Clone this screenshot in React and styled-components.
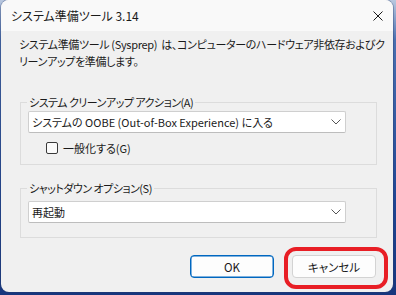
import React from "react";
import styled, { createGlobalStyle } from "styled-components";

const Global = createGlobalStyle`
  html, body { margin: 0; padding: 0; }
  body {
    width: 396px; height: 295px; overflow: hidden;
    background: linear-gradient(180deg, #b9c8df 0px, #4a6fb0 40px, #1f4593 200px, #17367d 295px);
    font-family: "Noto Sans CJK JP", "Noto Sans", sans-serif;
    font-feature-settings: "palt";
    color: #1a1a1a;
  }
`;

const Window = styled.div`
  margin-left: 1px;
  width: 392px;
  height: 292px;
  border-radius: 8px;
  overflow: hidden;
  background: #f0f0f0;
  display: flex;
  flex-direction: column;
  box-shadow: 0 0 0 1px rgba(40, 60, 110, 0.35);
`;

const TitleBar = styled.div`
  height: 31px;
  flex: none;
  background: #f9f9f9;
  display: flex;
  align-items: center;
  justify-content: space-between;
  padding-left: 10px;
  font-size: 12px;
`;

const CloseBtn = styled.div`
  width: 46px;
  height: 31px;
  display: flex;
  align-items: center;
  justify-content: center;
  margin-right: -8px;
`;

const Body = styled.div`
  flex: 1;
  display: flex;
  flex-direction: column;
  padding: 5px 16px 0 18px;
  font-size: 11px;
`;

const Desc = styled.div`
  line-height: 17px;
  font-size: 11px;
  letter-spacing: -0.34px;
  white-space: pre;
`;

const Group = styled.fieldset`
  margin: ${(p) => p.$mt}px 0 0 1px;
  border: 1px solid #dcdcdc;
  padding: ${(p) => p.$pt}px 30px ${(p) => p.$pb}px 7px;
  min-width: 0;
`;

const Legend = styled.legend`
  padding: 0 2px;
  margin-left: -1px;
  font-size: 11px;
  letter-spacing: -0.5px;
  line-height: 16px;
`;

const Combo = styled.div`
  height: 22px;
  box-sizing: border-box;
  background: #fff;
  border: 1px solid #cfcfcf;
  border-bottom-color: #bdbdbd;
  border-radius: 2px;
  display: flex;
  align-items: center;
  justify-content: space-between;
  padding: 0 4px 0 3px;
  font-size: 11px;
  white-space: nowrap;
`;

const CheckRow = styled.label`
  display: flex;
  align-items: center;
  gap: 5px;
  margin: 7px 0 0 18px;
  height: 16px;
  font-size: 11px;
`;

const Box = styled.span`
  width: 12px;
  height: 12px;
  box-sizing: border-box;
  border: 1px solid #3a3a3a;
  border-radius: 2px;
  background: #fbfbfb;
`;

const Footer = styled.div`
  display: flex;
  justify-content: flex-end;
  gap: 18px;
  margin-top: 17px;
  padding-right: 1px;
`;

const Button = styled.div`
  position: relative;
  width: 84px;
  height: 23px;
  box-sizing: border-box;
  border-radius: 4px;
  background: #fdfdfd;
  border: ${(p) => (p.$primary ? "1px solid #0067c0" : "1px solid #d3d3d3")};
  box-shadow: ${(p) => (p.$primary ? "inset 0 0 0 0.5px #0067c0" : "none")};
  display: flex;
  align-items: center;
  justify-content: center;
  font-size: 11.5px;
`;

const Annotation = styled.span`
  position: absolute;
  left: -9px;
  top: -9px;
  right: -13px;
  bottom: -12px;
  border: 4px solid #e81e25;
  border-radius: 12px;
  pointer-events: none;
`;

const Chevron = () => (
  <svg width="10" height="6" viewBox="0 0 10 6">
    <path d="M0.5 0.5 L5 5 L9.5 0.5" fill="none" stroke="#555" strokeWidth="1" />
  </svg>
);

export default function App() {
  return (
    <>
      <Global />
      <Window>
        <TitleBar>
          <span>システム準備ツール 3.14</span>
          <CloseBtn>
            <svg width="10" height="10" viewBox="0 0 10 10">
              <path d="M0.5 0.5 L9.5 9.5 M9.5 0.5 L0.5 9.5" stroke="#1a1a1a" strokeWidth="1" />
            </svg>
          </CloseBtn>
        </TitleBar>
        <Body>
          <Desc>
            {"システム準備ツール (Sysprep)  は、コンピューターのハードウェア非依存およびク\nリーンアップを準備します。"}
          </Desc>
          <Group $mt={24} $pt={1} $pb={8}>
            <Legend>システム クリーンアップ アクション(A)</Legend>
            <Combo>
              <span>システムの OOBE (Out-of-Box Experience) に入る</span>
              <Chevron />
            </Combo>
            <CheckRow>
              <Box />
              <span>一般化する(G)</span>
            </CheckRow>
          </Group>
          <Group $mt={15} $pt={5} $pb={14}>
            <Legend>シャットダウン オプション(S)</Legend>
            <Combo>
              <span>再起動</span>
              <Chevron />
            </Combo>
          </Group>
          <Footer>
            <Button $primary>OK</Button>
            <Button>
              キャンセル
              <Annotation />
            </Button>
          </Footer>
        </Body>
      </Window>
    </>
  );
}
